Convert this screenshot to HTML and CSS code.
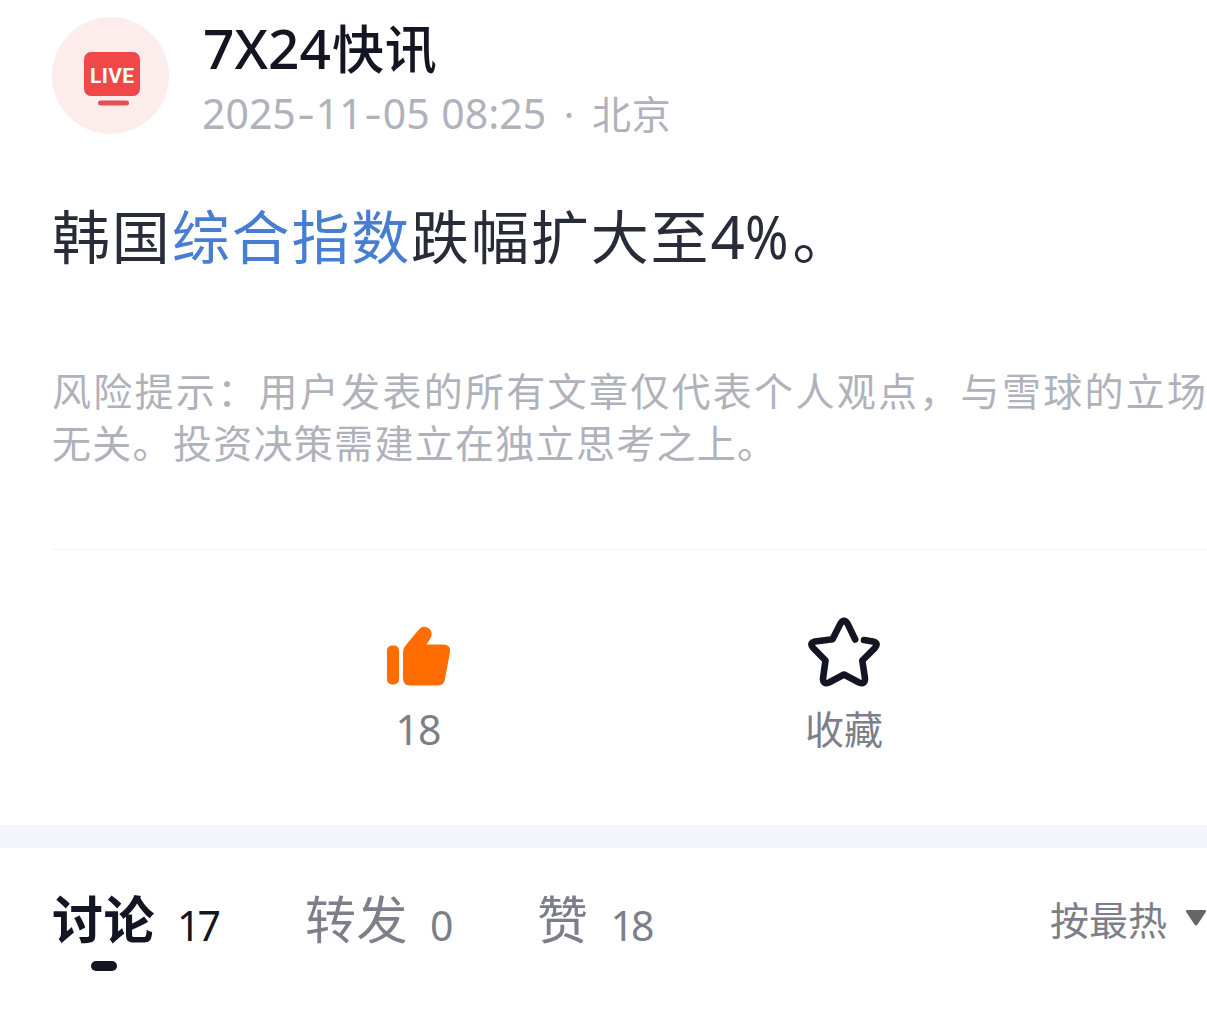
FILE: index.html
```html
<!DOCTYPE html>
<html lang="zh-CN">
<head>
<meta charset="utf-8">
<title>7X24快讯</title>
<link rel="stylesheet" href="styles.css">
</head>
<body>
<article class="post">
  <header class="author">
    <svg class="avatar" viewBox="0 0 117 117">
      <circle cx="58.5" cy="58.5" r="58.5" fill="#fdecec"/>
      <rect x="32" y="35" width="56" height="44" rx="7" fill="#f04848"/>
      <rect x="46" y="83.5" width="31" height="5" rx="2.5" fill="#e25154"/>
      <text x="60" y="66" class="live" textLength="44">LIVE</text>
    </svg>
    <div class="meta">
      <h1 class="name"><span class="latin">7X24</span><span>快讯</span></h1>
      <p class="date"><span class="latin">2025<span class="dash">-</span>11<span class="dash">-</span>05 <span class="time">08:25</span></span><span class="dot">·</span><span class="place">北京</span></p>
    </div>
  </header>
  <p class="headline">韩国<a class="link">综合指数</a>跌幅扩大至<span class="latin">4<span class="percent">%</span></span>。</p>
  <p class="risk"><span class="risk-wide">风险提示：用户发表的所有文章仅代表个人观点，与雪球的立</span>场<br><span class="risk-tight">无关。投资决策需建立在独立思考之上。</span></p>
  <div class="actions">
    <div class="action like">
      <svg class="icon" viewBox="0 0 72 72">
        <rect x="5" y="28.5" width="12" height="39" rx="5" fill="#ff6c00"/>
        <path d="M21 35Q21 31 24 28L36 13.500Q41 7 47 11.500Q52 16 48 22L44.500 27.500H61Q69 27.500 68 35L63 62Q62 68.500 56 68.500H28Q21 68.500 21 61Z" fill="#ff6c00"/>
      </svg>
      <span class="latin count">18</span>
    </div>
    <div class="action save">
      <svg class="icon" viewBox="0 0 72 72">
        <path d="M47.200 22.500L39.500 6.500Q36 1.300 32.500 6.500L24.500 22.200L7 24.500Q1 25.800 5 30.800L17.500 43.500L15 61.500Q15 68 21 65.500L36 57.500L51 65.500Q57 68 57 61.500L54.300 43.500L67 30.800Q71 25.800 65 24.500L56 23.100" fill="none" stroke="#131622" stroke-width="6.600" stroke-linecap="round" stroke-linejoin="round"/>
      </svg>
      <span>收藏</span>
    </div>
  </div>
</article>
<nav class="tabs">
  <div class="tab active"><b class="label">讨论</b><span class="latin num">17</span></div>
  <div class="tab repost"><span class="label">转发</span><span class="latin num">0</span></div>
  <div class="tab praise"><span class="label">赞</span><span class="latin num">18</span></div>
  <div class="sort">按最热<svg class="caret" viewBox="0 0 22 18"><path d="M2.500 1H19.500Q22 1 20.500 3.500L12.500 15.500Q11 17.500 9.500 15.500L1.500 3.500Q0 1 2.500 1Z" fill="#666"/></svg></div>
</nav>
</body>
</html>
```

FILE: styles.css
```css
* { box-sizing: border-box; }
body {
  margin: 0;
  background: #fff;
  color: #131622;
  font-family: "Noto Sans CJK SC", sans-serif;
  overflow: hidden;
}
.latin { font-family: "Noto Sans", sans-serif; line-height: 0; }
.post { height: 825px; padding: 16px 0 0 52px; }
.author { display: flex; gap: 34px; height: 178px; }
.avatar { width: 117px; height: 117px; margin-top: 1px; }
.live { font: 700 21px Roboto, sans-serif; fill: #fff; text-anchor: middle; }
.name, .date, .headline, .risk { margin: 0; white-space: nowrap; }
.name { display: flex; align-items: baseline; gap: 1px; font-size: 52px; line-height: 62px; font-weight: 500; letter-spacing: .8px; }
.name .latin { font-size: 55px; letter-spacing: 0; }
.date {
  display: flex;
  align-items: baseline;
  margin-top: 9px;
  margin-left: -1px;
  font-size: 39px;
  line-height: 50px;
  color: #afb2bb;
}
.date .latin { font-size: 41px; }
.dash { display: inline-block; width: 20px; text-align: center; transform: scaleX(1.3); }
.time { margin-left: 1px; }
.dot { width: 46px; text-align: center; font-family: "Noto Sans", sans-serif; line-height: 0; }
.place { letter-spacing: .7px; }
.headline { font-size: 58px; line-height: 80px; letter-spacing: 1.85px; color: #282c38; }
.headline .latin { font-size: 60px; letter-spacing: 0; }
.link { color: #467ed2; }
.percent { display: inline-block; transform: scaleX(.87); transform-origin: left; margin-right: -2px; }
.risk { margin-top: 89px; font-size: 39px; line-height: 52px; color: #afb2bb; }
.risk-wide { letter-spacing: 2.3px; }
.risk-tight { letter-spacing: 1.3px; }
.actions {
  display: flex;
  margin-top: 82px;
  padding-top: 67px;
  border-top: 1px solid #f4f4f5;
  font-size: 39px;
  line-height: 50px;
  color: #7c7f89;
}
.action { display: flex; flex-direction: column; align-items: center; width: 80px; }
.like { margin-left: 326px; }
.save { margin-left: 346px; }
.icon { width: 72px; height: 72px; margin-bottom: 13px; }
.count { font-size: 41px; line-height: 54px; letter-spacing: -1px; }
.tabs {
  display: flex;
  align-items: flex-start;
  height: 192px;
  border-top: 23px solid #f4f5fa;
  padding: 34px 0 0 52px;
  color: #7c7f89;
  white-space: nowrap;
}
.tab { position: relative; display: flex; align-items: baseline; height: 90px; font-size: 51px; line-height: 70px; }
.label { letter-spacing: .5px; }
.num { font-size: 41px; margin-left: 22px; letter-spacing: -3px; transform: translateY(2px); }
.active { color: #131622; width: 253px; }
.active::after {
  content: "";
  position: absolute;
  left: 39px;
  top: 79px;
  width: 26px;
  height: 10px;
  border-radius: 5px;
  background: #131622;
}
.repost { width: 232px; }
.sort { display: flex; align-items: center; margin-left: auto; font-size: 39px; line-height: 72px; }
.caret { width: 22px; height: 18px; margin-left: 18px; }
```
